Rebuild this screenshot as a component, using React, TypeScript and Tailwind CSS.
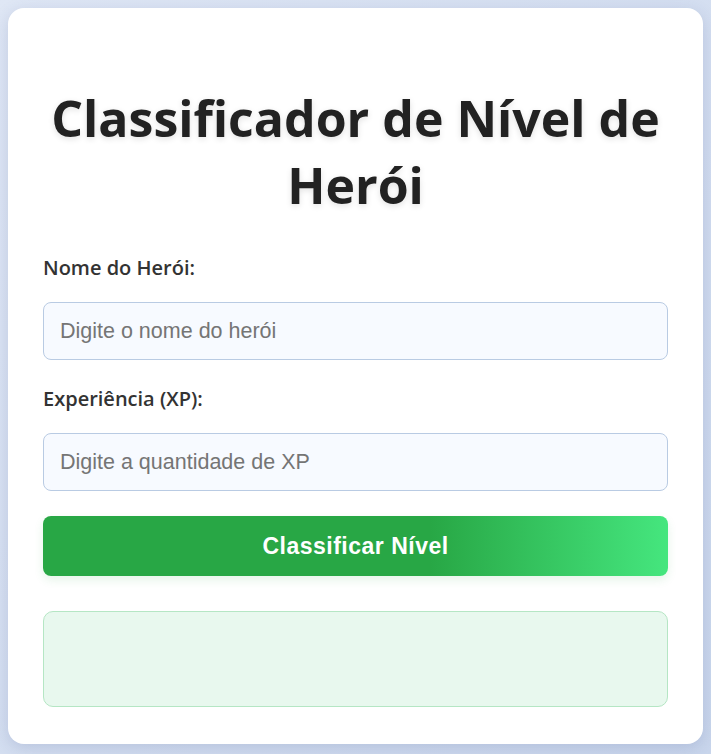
import { type FC } from 'react';

const Field: FC<{ id: string; label: string; placeholder: string; type?: string }> = ({ id, label, placeholder, type = 'text' }) => (
  <div className="flex flex-col">
    <label htmlFor={id} className="text-[20px] font-semibold text-[#333] leading-[24px] mb-[22px]">
      {label}
    </label>
    <input
      id={id}
      type={type}
      placeholder={placeholder}
      className="h-[58px] w-full rounded-lg border border-[#b9cbe3] bg-[#f7faff] px-4 text-[21.5px] text-[#333] placeholder:text-[#757575] outline-none"
      style={{ fontFamily: '"Liberation Sans", Arial, sans-serif' }}
    />
  </div>
);

export default function App() {
  return (
    <div
      className="min-h-[754px] bg-gradient-to-br from-[#dfe7f5] to-[#c9d6ec] p-2"
      style={{ fontFamily: '"Open Sans", "Noto Sans", sans-serif' }}
    >
      <div className="flex flex-col rounded-2xl bg-white px-[35px] pt-[77px] pb-[37px] shadow-[0_4px_16px_rgba(60,80,140,0.18)]">
        {/* Title */}
        <h1 className="text-center text-[50px] font-bold leading-[67px] text-[#222] [text-shadow:0_2px_6px_rgba(0,0,0,0.12)]">
          Classificador de Nível de Herói
        </h1>

        <div className="mt-[37px] flex flex-col gap-[27px]">
          <Field id="nome" label="Nome do Herói:" placeholder="Digite o nome do herói" />
          <Field id="xp" label="Experiência (XP):" placeholder="Digite a quantidade de XP" type="number" />
        </div>

        <button
          className="mt-[25px] h-[60px] w-full rounded-lg bg-[linear-gradient(90deg,#28a745_0%,#28a745_62%,#45e67e_100%)] text-[23px] font-bold tracking-[0.5px] text-white shadow-[0_4px_10px_rgba(40,167,69,0.12)]"
          style={{ fontFamily: '"Liberation Sans", Arial, sans-serif' }}
        >
          Classificar Nível
        </button>

        {/* Result */}
        <div className="mt-[35px] h-[96px] rounded-[10px] border border-[#b5e6c4] bg-[#e8f8ee]" />
      </div>
    </div>
  );
}
